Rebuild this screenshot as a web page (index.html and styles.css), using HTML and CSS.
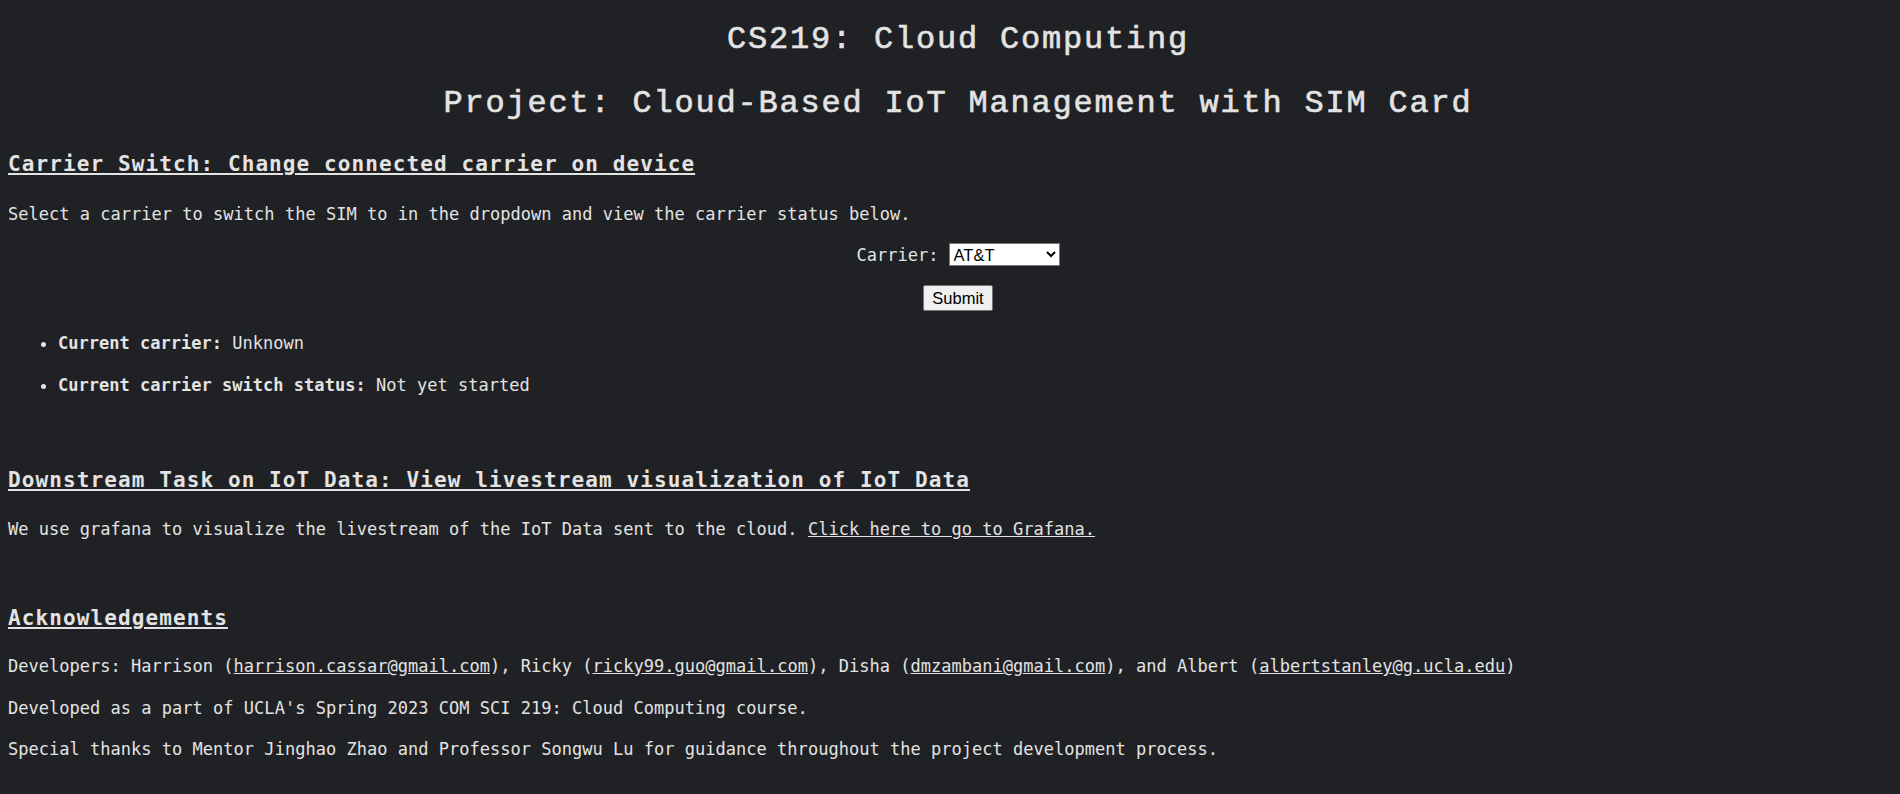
FILE: index.html
```html
<!DOCTYPE html>
<html lang="en">
<head>
<meta charset="utf-8">
<title>CS219: Cloud Computing</title>
<link rel="stylesheet" href="styles.css">
</head>
<body>
<div class="page">
  <h1 class="title title-first">CS219: Cloud Computing</h1>
  <h1 class="title title-second">Project: Cloud-Based IoT Management with SIM Card</h1>

  <h2 class="heading heading-first">Carrier Switch: Change connected carrier on device</h2>
  <p class="text text-intro">Select a carrier to switch the SIM to in the dropdown and view the carrier status below.</p>
  <form class="carrier-form">
    <div class="field-row">
      <label class="field-label" for="carrier">Carrier:</label>
      <select class="field-select" id="carrier">
        <option>AT&amp;T</option>
        <option>T-Mobile</option>
        <option>Verizon</option>
      </select>
    </div>
    <div class="submit-row">
      <button class="submit-btn" type="button">Submit</button>
    </div>
  </form>
  <ul class="status-list">
    <li class="status-item"><b>Current carrier:</b> Unknown</li>
    <li class="status-item status-item-next"><b>Current carrier switch status:</b> Not yet started</li>
  </ul>

  <h2 class="heading heading-second">Downstream Task on IoT Data: View livestream visualization of IoT Data</h2>
  <p class="text text-grafana">We use grafana to visualize the livestream of the IoT Data sent to the cloud. <a class="link" href="#">Click here to go to Grafana.</a></p>

  <h2 class="heading heading-third">Acknowledgements</h2>
  <p class="text text-devs">Developers: Harrison (<a class="link" href="#">harrison.cassar@gmail.com</a>), Ricky (<a class="link" href="#">ricky99.guo@gmail.com</a>), Disha (<a class="link" href="#">dmzambani@gmail.com</a>), and Albert (<a class="link" href="#">albertstanley@g.ucla.edu</a>)</p>
  <p class="text text-course">Developed as a part of UCLA's Spring 2023 COM SCI 219: Cloud Computing course.</p>
  <p class="text text-thanks">Special thanks to Mentor Jinghao Zhao and Professor Songwu Lu for guidance throughout the project development process.</p>
</div>
</body>
</html>
```

FILE: styles.css
```css
html, body {
  margin: 0;
  padding: 0;
  background: #202124;
}

body {
  overflow: hidden;
  color: #e3e3e3;
  font-family: "DejaVu Sans Mono", "Liberation Mono", monospace;
  font-size: 17px;
  letter-spacing: 0.02px;
  line-height: 22px;
  height: 794px;
}

.page {
  margin-left: 8px;
  margin-right: -8px;
}

.title {
  margin: 0;
  text-align: center;
  font-family: "Courier New", "Liberation Mono", monospace;
  font-weight: normal;
  -webkit-text-stroke: 0.6px currentColor;
  font-size: 32px;
  letter-spacing: 1.8px;
  line-height: 44px;
}

.title-first { margin-top: 18px; }
.title-second { margin-top: 20px; }

.heading {
  margin: 0;
  font-size: 21px;
  font-weight: bold;
  letter-spacing: 1.1px;
  line-height: 28px;
  text-decoration: underline;
  text-decoration-thickness: 2px;
  text-underline-offset: 2px;
}

.heading-first { margin-top: 24px; }
.heading-second { margin-top: 70px; }
.heading-third { margin-top: 64px; }

.text {
  margin: 0;
}

.text-intro { margin-top: 25px; }
.text-grafana { margin-top: 24px; }
.text-devs { margin-top: 23px; }
.text-course { margin-top: 20px; }
.text-thanks { margin-top: 19px; }

.link {
  color: inherit;
  text-decoration: underline;
}

.carrier-form {
  margin: 0;
}

.field-row {
  margin-top: 18px;
  display: flex;
  justify-content: center;
  align-items: center;
  gap: 10px;
  height: 23px;
}

.field-label {
  line-height: 22px;
}

.field-select {
  width: 111px;
  height: 23px;
  margin: 0;
  font-family: "Liberation Sans", Arial, sans-serif;
  font-size: 16.5px;
  letter-spacing: 0;
  color: #000;
  background: #fff;
  border: 1px solid #767676;
  border-radius: 0;
}

.submit-row {
  margin-top: 19px;
  display: flex;
  justify-content: center;
}

.submit-btn {
  height: 26px;
  margin: 0;
  padding: 0 8px;
  font-family: "Liberation Sans", Arial, sans-serif;
  font-size: 16.5px;
  letter-spacing: 0;
  color: #000;
  background: #efefef;
  border: 1px solid #767676;
  border-radius: 2px;
}

.status-list {
  margin: 21px 0 0 0;
  padding-left: 50px;
}

.status-item-next {
  margin-top: 20px;
}
```
